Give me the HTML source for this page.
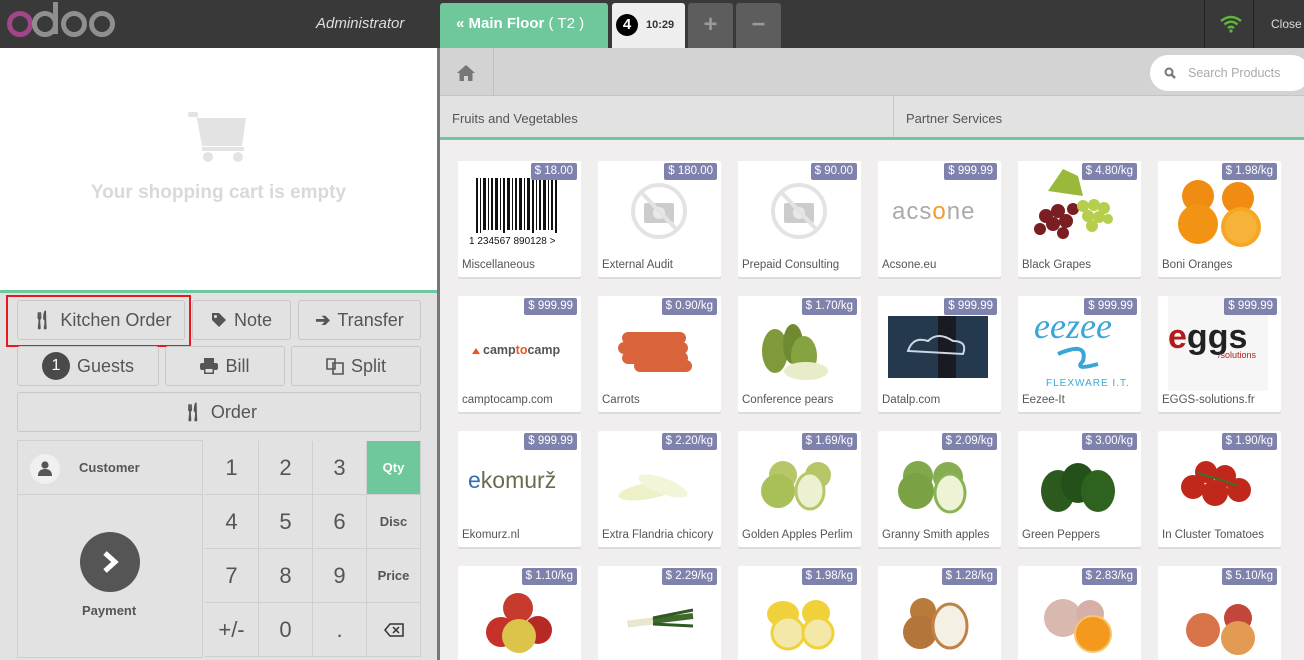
<!DOCTYPE html>
<html><head><meta charset="utf-8"><style>
*{box-sizing:border-box;margin:0;padding:0}
html,body{width:1304px;height:660px;overflow:hidden}
body{position:relative;background:#f0eeee;font-family:"Liberation Sans",sans-serif;color:#555}
.a{position:absolute}
.top{left:0;top:0;width:1304px;height:48px;background:#393939}
.btn{position:absolute;background:#e2e2e2;border:1px solid #c8c8c8;border-radius:3px;font-size:18px;color:#555;display:flex;align-items:center;justify-content:center;gap:7px}
.np{position:absolute;width:54px;height:54px;display:flex;align-items:center;justify-content:center;font-size:22px;color:#555;border-right:1px solid #cfcfcf;border-bottom:1px solid #cfcfcf;background:#e2e2e2}
.np.s{font-size:13px;font-weight:bold}
.card{position:absolute;width:123px;height:116px;background:#fff;border-radius:2px;box-shadow:0 2px 0 #dcdcdc;overflow:hidden}
.card svg{position:absolute;left:0;top:0}
.pr{position:absolute;right:4px;top:2px;background:#7f82ac;color:#fff;font-size:11.5px;padding:1px 4px;border-radius:2px;line-height:15px}
.nm{position:absolute;left:4px;top:98px;font-size:11.5px;color:#555;white-space:nowrap}
</style></head><body>
<div class="a top"></div>
<svg class="a" style="left:0;top:0" width="130" height="48" viewBox="0 0 130 48">
<circle cx="20" cy="24" r="10.5" fill="none" stroke="#a24689" stroke-width="5"/>
<circle cx="45" cy="24" r="10.5" fill="none" stroke="#8f8f8f" stroke-width="5"/>
<rect x="53" y="2" width="5" height="32" fill="#8f8f8f"/>
<circle cx="74" cy="24" r="10.5" fill="none" stroke="#8f8f8f" stroke-width="5"/>
<circle cx="102" cy="24" r="10.5" fill="none" stroke="#8f8f8f" stroke-width="5"/>
</svg>
<div class="a" style="left:316px;top:15px;font-size:15px;font-style:italic;color:#ddd">Administrator</div>
<div class="a" style="left:440px;top:3px;width:168px;height:45px;background:#6ec89b;border-radius:3px 3px 0 0;color:#fff;font-size:15px;font-weight:bold;line-height:42px;padding-left:16px">« Main Floor <span style="font-weight:normal">( T2 )</span></div>
<div class="a" style="left:612px;top:3px;width:73px;height:45px;background:#eee;border-radius:3px 3px 0 0"></div>
<div class="a" style="left:616px;top:14px;width:22px;height:22px;border-radius:50%;background:#000;color:#fff;font-size:15px;font-weight:bold;text-align:center;line-height:22px">4</div>
<div class="a" style="left:646px;top:19px;font-size:11px;font-weight:bold;color:#333">10:29</div>
<div class="a" style="left:688px;top:3px;width:45px;height:45px;background:#5d5d5d;border-radius:3px 3px 0 0;color:#999;font-size:24px;font-weight:bold;text-align:center;line-height:44px">+</div>
<div class="a" style="left:736px;top:3px;width:45px;height:45px;background:#5d5d5d;border-radius:3px 3px 0 0;color:#999;font-size:24px;font-weight:bold;text-align:center;line-height:44px">−</div>
<div class="a" style="left:1204px;top:0;width:1px;height:48px;background:#222"></div>
<div class="a" style="left:1253px;top:0;width:1px;height:48px;background:#222"></div>
<svg class="a" style="left:1220px;top:15px" width="22" height="18" viewBox="0 0 22 18"><path d="M1 6 Q11 -2 21 6" fill="none" stroke="#5fb63a" stroke-width="2.5"/><path d="M4.5 9.5 Q11 4 17.5 9.5" fill="none" stroke="#5fb63a" stroke-width="2.5"/><path d="M8 13 Q11 10.5 14 13" fill="none" stroke="#5fb63a" stroke-width="2.5"/><circle cx="11" cy="16" r="1.6" fill="#5fb63a"/></svg>
<div class="a" style="left:1271px;top:17px;font-size:12px;color:#ddd">Close</div>

<div class="a" style="left:0;top:48px;width:437px;height:242px;background:#fff"></div>
<svg class="a" style="left:188px;top:110px" width="62" height="54" viewBox="0 0 62 54"><rect x="0" y="2" width="10" height="5" rx="2" fill="#e3e3e3"/><path d="M8 4 L14 36 H54 L58 8 H10 Z" fill="#e3e3e3"/><rect x="14" y="37" width="42" height="4" fill="#e3e3e3"/><circle cx="20" cy="47" r="5" fill="#e3e3e3"/><circle cx="50" cy="47" r="5" fill="#e3e3e3"/></svg>
<div class="a" style="left:0;top:182px;width:437px;text-align:center;font-size:19px;font-weight:bold;color:#d9d9d9">Your shopping cart is empty</div>
<div class="a" style="left:0;top:290px;width:437px;height:370px;background:#e2e2e2;border-top:3px solid #6ec89b"></div>
<div class="a" style="left:437px;top:48px;width:3px;height:612px;background:#777"></div>

<div class="btn" style="left:17px;top:300px;width:168px;height:40px"><span style="font-weight:bold">🍴︎</span>Kitchen Order</div>
<div class="a" style="left:6px;top:295px;width:185px;height:52px;border:2px solid #e8191c"></div>
<div class="btn" style="left:192px;top:300px;width:99px;height:40px"><svg width="16" height="16" viewBox="0 0 16 16"><path d="M1 1 H8 L15 8 L8 15 L1 8 Z" fill="#555"/><circle cx="4.5" cy="4.5" r="1.5" fill="#e2e2e2"/></svg>Note</div>
<div class="btn" style="left:298px;top:300px;width:123px;height:40px"><b>➔</b>Transfer</div>
<div class="btn" style="left:17px;top:346px;width:142px;height:40px"><span style="display:inline-block;width:28px;height:28px;border-radius:50%;background:#4a4a4a;color:#fff;text-align:center;line-height:28px;font-size:16px">1</span>Guests</div>
<div class="btn" style="left:165px;top:346px;width:120px;height:40px"><svg width="18" height="16" viewBox="0 0 18 16"><rect x="4" y="0" width="10" height="5" fill="#555"/><rect x="0" y="5" width="18" height="7" rx="2" fill="#555"/><rect x="4" y="10" width="10" height="6" fill="#555"/><rect x="5.5" y="11" width="7" height="3.5" fill="#e2e2e2"/></svg>Bill</div>
<div class="btn" style="left:291px;top:346px;width:130px;height:40px"><svg width="18" height="18" viewBox="0 0 18 18"><path d="M1 2 H9 V12 H1 Z M7 6 H17 V17 H7 Z" fill="none" stroke="#555" stroke-width="1.6"/></svg>Split</div>
<div class="btn" style="left:17px;top:392px;width:404px;height:40px"><b>🍴︎</b>Order</div>

<div class="a" style="left:17px;top:440px;width:186px;height:218px;border:1px solid #cfcfcf;background:#e2e2e2"></div>
<div class="a" style="left:17px;top:494px;width:186px;height:1px;background:#cfcfcf"></div>
<div class="a" style="left:30px;top:454px;width:30px;height:30px;border-radius:50%;background:#f0f0f0"></div>
<svg class="a" style="left:38px;top:461px" width="14" height="15" viewBox="0 0 14 15"><circle cx="7" cy="4" r="3.6" fill="#555"/><path d="M0 15 Q0 8 7 8 Q14 8 14 15 Z" fill="#555"/></svg>
<div class="a" style="left:79px;top:460px;font-size:13px;font-weight:bold;color:#555">Customer</div>
<div class="a" style="left:80px;top:532px;width:60px;height:60px;border-radius:50%;background:#555"></div>
<svg class="a" style="left:100px;top:550px" width="22" height="24" viewBox="0 0 22 24"><path d="M5 3 L15 12 L5 21" fill="none" stroke="#fff" stroke-width="5"/></svg>
<div class="a" style="left:82px;top:603px;font-size:13px;font-weight:bold;color:#555">Payment</div>

<div class="np" style="left:205px;top:441px">1</div><div class="np" style="left:259px;top:441px">2</div><div class="np" style="left:313px;top:441px">3</div><div class="np s" style="left:367px;top:441px;background:#6ec89b;color:#fff">Qty</div>
<div class="np" style="left:205px;top:495px">4</div><div class="np" style="left:259px;top:495px">5</div><div class="np" style="left:313px;top:495px">6</div><div class="np s" style="left:367px;top:495px">Disc</div>
<div class="np" style="left:205px;top:549px">7</div><div class="np" style="left:259px;top:549px">8</div><div class="np" style="left:313px;top:549px">9</div><div class="np s" style="left:367px;top:549px">Price</div>
<div class="np" style="left:205px;top:603px">+/-</div><div class="np" style="left:259px;top:603px">0</div><div class="np" style="left:313px;top:603px">.</div><div class="np" style="left:367px;top:603px"><svg width="20" height="14" viewBox="0 0 20 14"><path d="M1 7 L6 1 H19 V13 H6 Z" fill="none" stroke="#333" stroke-width="1.5"/><path d="M9 4 L15 10 M15 4 L9 10" stroke="#333" stroke-width="1.5"/></svg></div>

<div class="a" style="left:440px;top:48px;width:864px;height:48px;background:#d3d3d3;border-bottom:1px solid #c4c4c4"></div>
<div class="a" style="left:493px;top:48px;width:1px;height:48px;background:#c0c0c0"></div>
<svg class="a" style="left:456px;top:64px" width="20" height="17" viewBox="0 0 20 17"><path d="M10 1 L1 9 H3.5 V17 H8 V12 H12 V17 H16.5 V9 H19 Z" fill="#777"/></svg>
<div class="a" style="left:1150px;top:55px;width:160px;height:36px;border-radius:18px;background:#fff"></div>
<svg class="a" style="left:1164px;top:67px" width="12" height="12" viewBox="0 0 12 12"><circle cx="5" cy="5" r="3.5" fill="none" stroke="#777" stroke-width="2"/><path d="M7.5 7.5 L11 11" stroke="#777" stroke-width="2.4"/></svg>
<div class="a" style="left:1188px;top:66px;font-size:12.5px;color:#aaa">Search Products</div>
<div class="a" style="left:440px;top:96px;width:864px;height:44px;background:#e2e2e2;border-bottom:3px solid #6ec89b"></div>
<div class="a" style="left:893px;top:96px;width:1px;height:41px;background:#c8c8c8"></div>
<div class="a" style="left:452px;top:111px;font-size:13px;color:#555">Fruits and Vegetables</div>
<div class="a" style="left:906px;top:111px;font-size:13px;color:#555">Partner Services</div>

<div class="card" style="left:458px;top:161px"><svg width="123" height="95"><g fill="#111"><rect x="18" y="17" width="2" height="55"/><rect x="22" y="17" width="1" height="55"/><rect x="25" y="17" width="3" height="52"/><rect x="30" y="17" width="1" height="52"/><rect x="33" y="17" width="2" height="52"/><rect x="37" y="17" width="3" height="52"/><rect x="42" y="17" width="1" height="52"/><rect x="45" y="17" width="2" height="55"/><rect x="49" y="17" width="3" height="52"/><rect x="54" y="17" width="1" height="52"/><rect x="57" y="17" width="2" height="52"/><rect x="61" y="17" width="3" height="52"/><rect x="66" y="17" width="1" height="52"/><rect x="69" y="17" width="3" height="52"/><rect x="74" y="17" width="2" height="55"/><rect x="78" y="17" width="1" height="52"/><rect x="81" y="17" width="2" height="52"/><rect x="85" y="17" width="3" height="52"/><rect x="90" y="17" width="1" height="52"/><rect x="93" y="17" width="2" height="52"/><rect x="97" y="17" width="2" height="55"/></g><text x="11" y="83" font-size="10" fill="#111" font-family="Liberation Sans">1 234567 890128 &gt;</text></svg><div class="pr">$ 18.00</div><div class="nm">Miscellaneous</div></div>
<div class="card" style="left:598px;top:161px"><svg width="123" height="95"><circle cx="61" cy="50" r="26" fill="none" stroke="#e3e3e3" stroke-width="4"/><rect x="46" y="42" width="30" height="20" rx="2" fill="#ccc"/><circle cx="61" cy="52" r="6" fill="#e8e8e8"/><path d="M43 31 L79 69" stroke="#e3e3e3" stroke-width="4"/></svg><div class="pr">$ 180.00</div><div class="nm">External Audit</div></div>
<div class="card" style="left:738px;top:161px"><svg width="123" height="95"><circle cx="61" cy="50" r="26" fill="none" stroke="#e3e3e3" stroke-width="4"/><rect x="46" y="42" width="30" height="20" rx="2" fill="#ccc"/><circle cx="61" cy="52" r="6" fill="#e8e8e8"/><path d="M43 31 L79 69" stroke="#e3e3e3" stroke-width="4"/></svg><div class="pr">$ 90.00</div><div class="nm">Prepaid Consulting</div></div>
<div class="card" style="left:878px;top:161px"><svg width="123" height="95"><text x="14" y="58" font-size="24" fill="#aaa" font-family="Liberation Sans" letter-spacing="1">acs<tspan fill="#f39c27">o</tspan>ne</text></svg><div class="pr">$ 999.99</div><div class="nm">Acsone.eu</div></div>
<div class="card" style="left:1018px;top:161px"><svg width="123" height="95"><path d="M30 30 L45 8 L60 15 L65 35 Z" fill="#9ab83a"/><g fill="#7a1e22"><circle cx="28" cy="55" r="7"/><circle cx="40" cy="50" r="7"/><circle cx="35" cy="63" r="7"/><circle cx="48" cy="60" r="7"/><circle cx="22" cy="68" r="6"/><circle cx="45" cy="72" r="6"/><circle cx="55" cy="48" r="6"/></g><g fill="#b5cf4c"><circle cx="65" cy="45" r="6"/><circle cx="76" cy="44" r="6"/><circle cx="86" cy="47" r="6"/><circle cx="70" cy="55" r="6"/><circle cx="81" cy="56" r="6"/><circle cx="74" cy="65" r="6"/><circle cx="90" cy="58" r="5"/></g></svg><div class="pr">$ 4.80/kg</div><div class="nm">Black Grapes</div></div>
<div class="card" style="left:1158px;top:161px"><svg width="123" height="95"><circle cx="40" cy="35" r="16" fill="#f08c12"/><circle cx="80" cy="37" r="16" fill="#f08c12"/><circle cx="40" cy="63" r="20" fill="#f39314"/><circle cx="83" cy="66" r="20" fill="#f5a623"/><circle cx="83" cy="66" r="16" fill="#f7b23a"/></svg><div class="pr">$ 1.98/kg</div><div class="nm">Boni Oranges</div></div>

<div class="card" style="left:458px;top:296px"><svg width="123" height="95"><path d="M14 58 L18 52 L22 58 Z" fill="#f0541e"/><text x="25" y="58" font-size="12.5" font-weight="bold" fill="#555" font-family="Liberation Sans">camp<tspan fill="#f0541e">to</tspan>camp</text></svg><div class="pr">$ 999.99</div><div class="nm">camptocamp.com</div></div>
<div class="card" style="left:598px;top:296px"><svg width="123" height="95"><g fill="#d9643c"><rect x="24" y="36" width="64" height="12" rx="6"/><rect x="20" y="46" width="70" height="12" rx="6"/><rect x="24" y="56" width="66" height="12" rx="6"/><rect x="36" y="64" width="58" height="12" rx="6"/></g></svg><div class="pr">$ 0.90/kg</div><div class="nm">Carrots</div></div>
<div class="card" style="left:738px;top:296px"><svg width="123" height="95"><ellipse cx="37" cy="55" rx="13" ry="22" fill="#7f9a3b"/><ellipse cx="55" cy="48" rx="10" ry="20" fill="#6f8a30"/><ellipse cx="66" cy="60" rx="13" ry="20" fill="#86a341"/><ellipse cx="68" cy="75" rx="22" ry="9" fill="#e8ecc8"/></svg><div class="pr">$ 1.70/kg</div><div class="nm">Conference pears</div></div>
<div class="card" style="left:878px;top:296px"><svg width="123" height="95"><rect x="10" y="20" width="100" height="62" fill="#24384e"/><rect x="60" y="20" width="18" height="62" fill="#1a1a22"/><path d="M30 55 Q35 40 50 45 Q60 35 75 45 Q90 45 85 58 Z" fill="none" stroke="#cfd8e2" stroke-width="2"/></svg><div class="pr">$ 999.99</div><div class="nm">Datalp.com</div></div>
<div class="card" style="left:1018px;top:296px"><svg width="123" height="95"><text x="16" y="42" font-size="36" font-style="italic" fill="#3aa6d8" font-family="Liberation Serif">eezee</text><path d="M40 58 Q70 45 65 65 Q55 75 80 68" fill="none" stroke="#3aa6d8" stroke-width="4"/><text x="28" y="90" font-size="10" fill="#3aa6d8" font-family="Liberation Sans" letter-spacing="1">FLEXWARE I.T.</text></svg><div class="pr">$ 999.99</div><div class="nm">Eezee-It</div></div>
<div class="card" style="left:1158px;top:296px"><svg width="123" height="95"><rect x="10" y="0" width="100" height="95" fill="#f6f6f6"/><text x="10" y="52" font-size="34" font-weight="bold" fill="#222" font-family="Liberation Sans"><tspan fill="#b31b1b">e</tspan>ggs</text><text x="60" y="62" font-size="9" fill="#b31b1b" font-family="Liberation Sans">/solutions</text></svg><div class="pr">$ 999.99</div><div class="nm">EGGS-solutions.fr</div></div>

<div class="card" style="left:458px;top:431px"><svg width="123" height="95"><text x="10" y="57" font-size="23" fill="#6d6a50" font-family="Liberation Sans"><tspan fill="#2f6fb5">e</tspan>komurž</text></svg><div class="pr">$ 999.99</div><div class="nm">Ekomurz.nl</div></div>
<div class="card" style="left:598px;top:431px"><svg width="123" height="95"><ellipse cx="50" cy="60" rx="30" ry="8" fill="#eef0c8" transform="rotate(-10 50 60)"/><ellipse cx="65" cy="55" rx="26" ry="8" fill="#f3f5d8" transform="rotate(20 65 55)"/></svg><div class="pr">$ 2.20/kg</div><div class="nm">Extra Flandria chicory</div></div>
<div class="card" style="left:738px;top:431px"><svg width="123" height="95"><circle cx="45" cy="44" r="14" fill="#b7c768"/><circle cx="80" cy="44" r="13" fill="#b7c768"/><circle cx="40" cy="60" r="17" fill="#a9bf58"/><ellipse cx="72" cy="60" rx="14" ry="18" fill="#eef0d2" stroke="#b7c768" stroke-width="3"/></svg><div class="pr">$ 1.69/kg</div><div class="nm">Golden Apples Perlim</div></div>
<div class="card" style="left:878px;top:431px"><svg width="123" height="95"><circle cx="40" cy="45" r="15" fill="#7fa94a"/><circle cx="70" cy="46" r="15" fill="#86ad52"/><circle cx="38" cy="60" r="18" fill="#78a243"/><ellipse cx="72" cy="62" rx="15" ry="19" fill="#eef3d6" stroke="#8ab356" stroke-width="3"/></svg><div class="pr">$ 2.09/kg</div><div class="nm">Granny Smith apples</div></div>
<div class="card" style="left:1018px;top:431px"><svg width="123" height="95"><ellipse cx="40" cy="60" rx="17" ry="21" fill="#2c5a1e"/><ellipse cx="60" cy="52" rx="17" ry="20" fill="#24501a"/><ellipse cx="80" cy="60" rx="17" ry="21" fill="#2f611f"/></svg><div class="pr">$ 3.00/kg</div><div class="nm">Green Peppers</div></div>
<div class="card" style="left:1158px;top:431px"><svg width="123" height="95"><g fill="#c0281b"><circle cx="48" cy="41" r="11"/><circle cx="67" cy="45" r="11"/><circle cx="35" cy="56" r="12"/><circle cx="57" cy="62" r="13"/><circle cx="81" cy="59" r="12"/></g><path d="M40 42 L60 48 L80 55" fill="none" stroke="#3f6e2a" stroke-width="2"/></svg><div class="pr">$ 1.90/kg</div><div class="nm">In Cluster Tomatoes</div></div>

<div class="card" style="left:458px;top:566px"><svg width="123" height="95"><circle cx="60" cy="42" r="15" fill="#c73a2e"/><circle cx="43" cy="66" r="15" fill="#c4322a"/><circle cx="80" cy="64" r="14" fill="#b52a24"/><circle cx="61" cy="70" r="17" fill="#dcc44a"/></svg><div class="pr">$ 1.10/kg</div><div class="nm">Apples</div></div>
<div class="card" style="left:598px;top:566px"><svg width="123" height="95"><path d="M30 58 L95 50" stroke="#3f6a2c" stroke-width="6"/><path d="M30 58 L55 55" stroke="#eae6d0" stroke-width="7"/><path d="M55 52 L95 44 M55 58 L95 60" stroke="#2f5a24" stroke-width="3"/></svg><div class="pr">$ 2.29/kg</div><div class="nm">Leeks</div></div>
<div class="card" style="left:738px;top:566px"><svg width="123" height="95"><ellipse cx="45" cy="48" rx="16" ry="13" fill="#f1d13a"/><ellipse cx="78" cy="47" rx="14" ry="13" fill="#f1d13a"/><circle cx="50" cy="67" r="16" fill="#f3e8a8" stroke="#f1d13a" stroke-width="3"/><circle cx="80" cy="67" r="15" fill="#f3e8a8" stroke="#f1d13a" stroke-width="3"/></svg><div class="pr">$ 1.98/kg</div><div class="nm">Lemons</div></div>
<div class="card" style="left:878px;top:566px"><svg width="123" height="95"><circle cx="45" cy="45" r="13" fill="#b97b3c"/><circle cx="42" cy="66" r="17" fill="#b4753a"/><ellipse cx="72" cy="60" rx="17" ry="22" fill="#f4f0e4" stroke="#c18345" stroke-width="3"/></svg><div class="pr">$ 1.28/kg</div><div class="nm">Onions</div></div>
<div class="card" style="left:1018px;top:566px"><svg width="123" height="95"><circle cx="45" cy="52" r="19" fill="#d9b8b0"/><circle cx="72" cy="48" r="14" fill="#d6b0a6"/><circle cx="75" cy="68" r="18" fill="#f39a1e" stroke="#f6c670" stroke-width="2"/></svg><div class="pr">$ 2.83/kg</div><div class="nm">Oranges</div></div>
<div class="card" style="left:1158px;top:566px"><svg width="123" height="95"><circle cx="80" cy="52" r="14" fill="#c2473a"/><circle cx="45" cy="64" r="17" fill="#d8734a"/><circle cx="80" cy="72" r="17" fill="#e39a52"/></svg><div class="pr">$ 5.10/kg</div><div class="nm">Peaches</div></div>
</body></html>
